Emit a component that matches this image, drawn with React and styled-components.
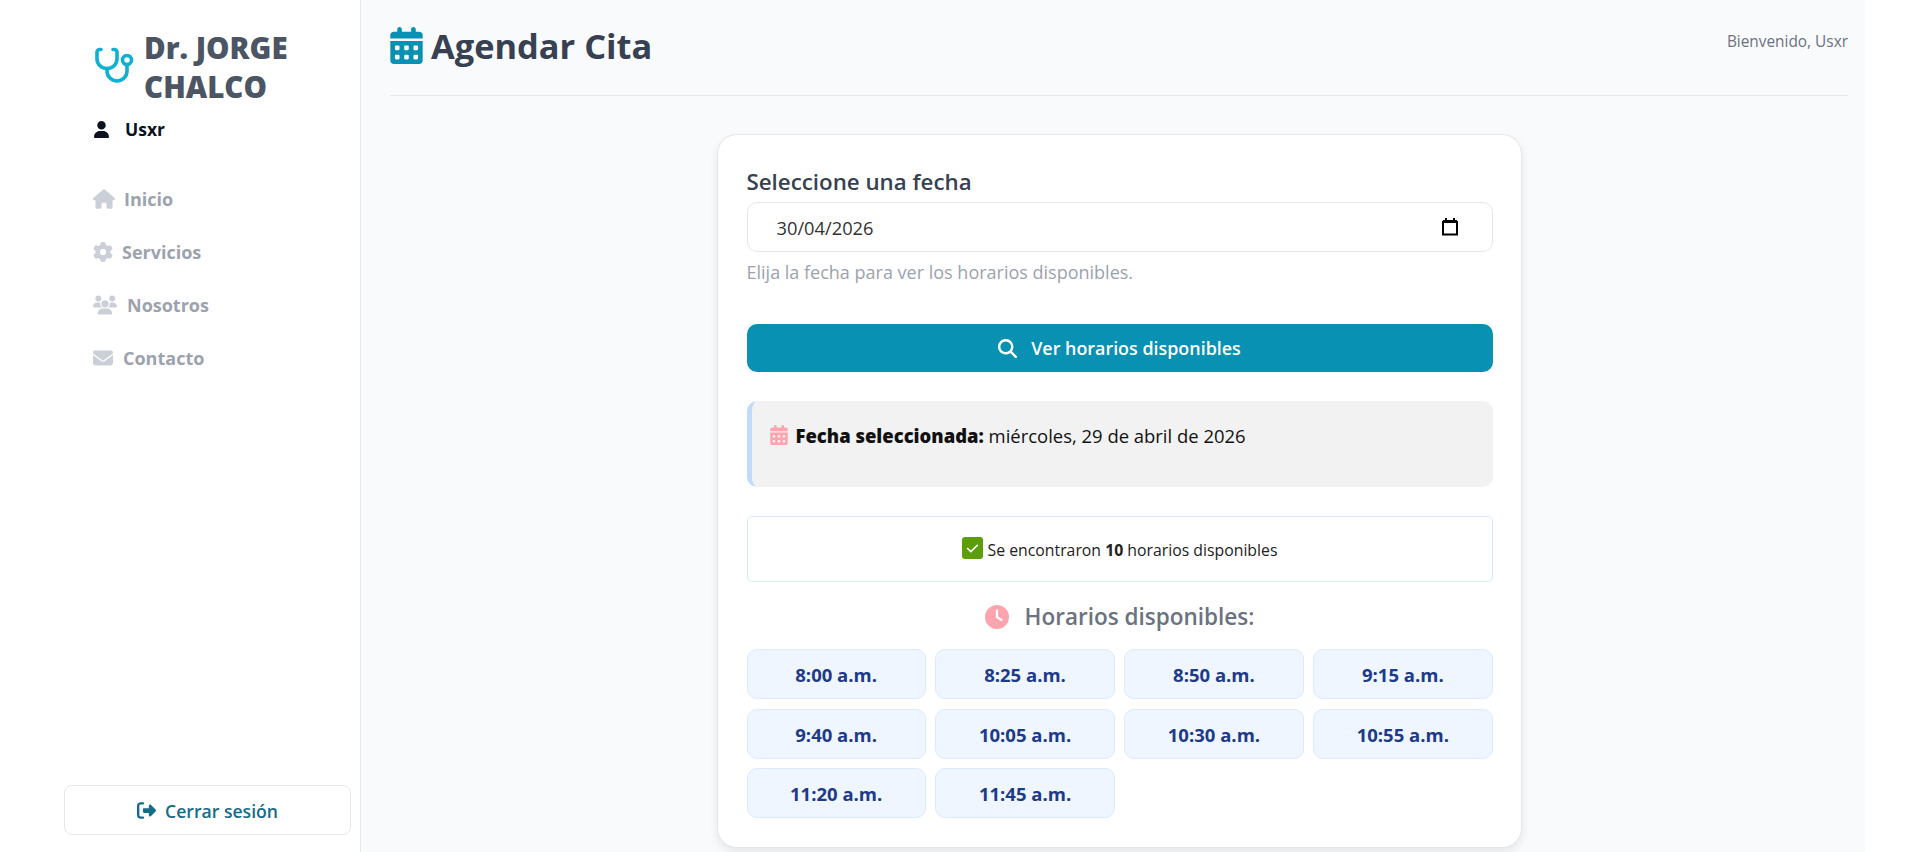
import React from 'react'
import styled, { createGlobalStyle } from 'styled-components'
import { FaHouse, FaGear, FaUsers, FaEnvelope, FaUser, FaCalendarDays, FaMagnifyingGlass, FaClock, FaRightFromBracket, FaCheck } from 'react-icons/fa6'

const GlobalStyle = createGlobalStyle`
html, body { margin:0; padding:0; background:#fff; height:100%; overflow:hidden; }
body { font-family:"Open Sans","Noto Sans",sans-serif; }
* { box-sizing:border-box; }
`
const Layout = styled.div`
display:flex;
width:1865px;
height:852px;
`
const Sidebar = styled.aside`
width:361px;
flex-shrink:0;
display:flex;
flex-direction:column;
background:#fff;
border-right:1px solid #e5e7eb;
padding-top:28px;
`
const Brand = styled.div`
display:flex;
align-items:center;
gap:9px;
padding-left:93px;
`
const BrandName = styled.h2`
margin:0;
width:190px;
font-size:29.5px;
line-height:39px;
font-weight:800;
color:#4b5563;
`
const UserRow = styled.div`
display:flex;
align-items:center;
gap:15px;
height:24px;
margin-top:11px;
padding-left:93px;
font-size:17.5px;
font-weight:700;
color:#0b1220;
`
const Nav = styled.nav`
display:flex;
flex-direction:column;
margin-top:31px;
padding-left:93px;
`
const NavItem = styled.a`
display:flex;
align-items:center;
gap:${p => p.$gap}px;
height:53px;
font-size:18px;
font-weight:700;
color:#9ca3af;
svg { color:#cbd0d8; }
`
const LogoutButton = styled.button`
display:flex;
align-items:center;
justify-content:center;
gap:9px;
height:50px;
margin:auto 9px 17px 64px;
padding-top:2px;
background:#fff;
border:1px solid #e5e7eb;
border-radius:8px;
font-family:inherit;
font-size:17.6px;
font-weight:600;
color:#146c8a;
`
const Main = styled.main`
flex:1;
background:#f9fafb;
padding:0 17px 0 29px;
`
const Header = styled.header`
display:flex;
justify-content:space-between;
height:96px;
border-bottom:1px solid #e5e7eb;
`
const Title = styled.h1`
display:flex;
align-items:center;
gap:6px;
height:38px;
margin:26px 0 0 -2px;
font-size:34.4px;
font-weight:700;
color:#374151;
svg { color:#0891b2; }
`
const Welcome = styled.span`
margin-top:32px;
font-size:15.4px;
line-height:20px;
color:#6b7280;
`
const Card = styled.section`
width:805px;
height:714px;
margin:38px auto 0;
padding:27px 28px 27px 29px;
background:#fff;
border:1px solid #e5e7eb;
border-radius:20px;
box-shadow:0 4px 8px rgba(0,0,0,.08);
display:flex;
flex-direction:column;
`
const Label = styled.label`
font-size:22.3px;
line-height:40px;
font-weight:600;
color:#374151;
`
const DateField = styled.div`
display:flex;
align-items:center;
justify-content:space-between;
height:50px;
padding:0 34px 0 29px;
border:1px solid #e5e7eb;
border-radius:10px;
font-size:18.3px;
color:#333;
`
const Help = styled.p`
margin:8px 0 0;
font-size:18px;
line-height:24px;
color:#9ca3af;
`
const SearchButton = styled.button`
display:flex;
align-items:center;
justify-content:center;
gap:14px;
height:48px;
margin-top:40px;
border:none;
border-radius:10px;
background:#0891b2;
color:#fff;
font-family:inherit;
font-size:17.9px;
font-weight:600;
`
const SelectedDate = styled.div`
display:flex;
align-items:center;
gap:7px;
height:86px;
margin-top:29px;
padding:0 0 18px 17px;
background:#f2f2f2;
border-left:5px solid #bfdbfe;
border-radius:10px;
font-size:18.45px;
color:#111;
svg { color:#fda4af; }
b { font-weight:800; }
`
const Found = styled.div`
display:flex;
align-items:center;
justify-content:center;
gap:5px;
height:66px;
margin-top:29px;
padding-top:2px;
border:1px solid #d6eaff;
border-radius:5px;
font-size:15.8px;
color:#222;
`
const CheckBox = styled.span`
display:flex;
align-items:center;
justify-content:center;
width:21px;
height:22px;
margin-top:-4px;
background:#5c9e0a;
border-radius:3px;
color:#fff;
`
const SlotsTitle = styled.h3`
display:flex;
align-items:center;
justify-content:center;
gap:16px;
margin:16px 0 13px;
font-size:22.5px;
line-height:38px;
font-weight:600;
color:#6b7280;
svg { color:#fda4af; }
`
const SlotGrid = styled.div`
display:grid;
grid-template-columns:repeat(4,1fr);
gap:9.6px;
`
const Slot = styled.button`
height:50px;
padding-top:2px;
background:#eff6ff;
border:1px solid #dbeafe;
border-radius:10px;
font-family:inherit;
font-size:18.5px;
font-weight:700;
color:#1e3a8a;
`

const links = [
    { label: 'Inicio', Icon: FaHouse, gap: 9, size: 22 },
    { label: 'Servicios', Icon: FaGear, gap: 9, size: 20 },
    { label: 'Nosotros', Icon: FaUsers, gap: 10, size: 24 },
    { label: 'Contacto', Icon: FaEnvelope, gap: 10, size: 20 },
]
const slots = ['8:00 a.m.', '8:25 a.m.', '8:50 a.m.', '9:15 a.m.', '9:40 a.m.', '10:05 a.m.', '10:30 a.m.', '10:55 a.m.', '11:20 a.m.', '11:45 a.m.']

function BrandIcon() {
    return (
        <svg width="42" height="42" viewBox="8 11 42 42" fill="none" stroke="#0fb0d3" strokeWidth="3.6" strokeLinecap="round" strokeLinejoin="round">
            <path d="M16 14.5h-1.5a2.5 2.5 0 0 0-2.5 2.5v7a10 9.5 0 0 0 20 0v-7a2.5 2.5 0 0 0-2.5-2.5H28" />
            <path d="M22 33.5v2.5a10 10 0 0 0 20 0v-6.5" />
            <circle cx="42" cy="25" r="4.5" />
        </svg>
    )
}

function PickerIcon() {
    return (
        <svg width="16" height="18" viewBox="0 0 16 18" fill="none">
            <path d="M1 4h14v12.5H1z" stroke="#000" strokeWidth="2" />
            <path d="M1 2h14v3H1zM3 0h2v2H3zM11 0h2v2h-2z" fill="#000" />
        </svg>
    )
}

function App() {
    return (
        <>
            <GlobalStyle />
            <Layout>
                <Sidebar>
                    <Brand>
                        <BrandIcon />
                        <BrandName>Dr. JORGE CHALCO</BrandName>
                    </Brand>
                    <UserRow><FaUser size={17} />Usxr</UserRow>
                    <Nav>
                        {links.map(({ label, Icon, gap, size }) => (
                            <NavItem key={label} $gap={gap}><Icon size={size} />{label}</NavItem>
                        ))}
                    </Nav>
                    <LogoutButton><FaRightFromBracket size={19} />Cerrar sesión</LogoutButton>
                </Sidebar>
                <Main>
                    <Header>
                        <Title><FaCalendarDays size={37} />Agendar Cita</Title>
                        <Welcome>Bienvenido, Usxr</Welcome>
                    </Header>
                    <Card>
                        <Label>Seleccione una fecha</Label>
                        <DateField>30/04/2026<PickerIcon /></DateField>
                        <Help>Elija la fecha para ver los horarios disponibles.</Help>
                        <SearchButton><FaMagnifyingGlass size={19} />Ver horarios disponibles</SearchButton>
                        <SelectedDate>
                            <FaCalendarDays size={20} />
                            <span><b>Fecha seleccionada:</b> miércoles, 29 de abril de 2026</span>
                        </SelectedDate>
                        <Found>
                            <CheckBox><FaCheck size={13} /></CheckBox>
                            <span>Se encontraron <b>10</b> horarios disponibles</span>
                        </Found>
                        <SlotsTitle><FaClock size={24} />Horarios disponibles:</SlotsTitle>
                        <SlotGrid>
                            {slots.map(s => <Slot key={s}>{s}</Slot>)}
                        </SlotGrid>
                    </Card>
                </Main>
            </Layout>
        </>
    )
}

export default App
